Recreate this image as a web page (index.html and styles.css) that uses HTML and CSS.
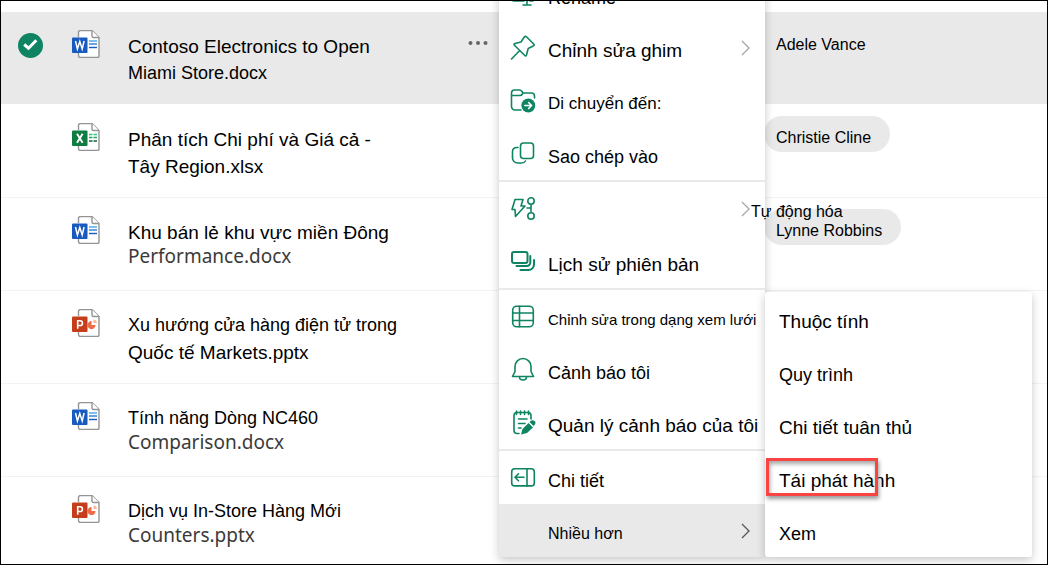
FILE: index.html
```html
<!DOCTYPE html>
<html lang="vi">
<head>
<meta charset="utf-8">
<title>Tài liệu</title>
<link rel="stylesheet" href="styles.css">
</head>
<body>
<svg class="defs" aria-hidden="true">
  <defs>
    <g id="page">
      <path d="M7.500 1.500h12l7 7v17a2 2 0 0 1-2 2h-17z" fill="#fff"/>
      <path d="M6.500 7V2.500a2 2 0 0 1 2-2H20L27 7.500V26a1.500 1.500 0 0 1-1.500 1.500h-17a2 2 0 0 1-2-2V23" fill="#fff" stroke="#949494" stroke-width="1.400"/>
      <path d="M20 .500V6a1.500 1.500 0 0 0 1.500 1.500H27" fill="#fff" stroke="#949494" stroke-width="1.400"/>
    </g>
    <symbol id="word" viewBox="0 0 28 28">
      <use href="#page"/>
      <path d="M17 11h8" stroke="#41a5ee" stroke-width="1.400"/><path d="M17 14h8" stroke="#2b7cd3" stroke-width="1.400"/><path d="M17 17.500h8" stroke="#185abd" stroke-width="1.400"/>
      <rect y="7.500" width="15.500" height="15.500" rx="1" fill="#185abd"/>
      <path d="M3.500 11l1.900 8 2.400-7.500 2.400 7.500 1.900-8" fill="none" stroke="#fff" stroke-width="1.500"/>
    </symbol>
    <symbol id="excel" viewBox="0 0 28 28">
      <use href="#page"/>
      <path d="M17 11.500h3.500M21.500 11.500H25" stroke="#33c481" stroke-width="1.500"/><path d="M17 14.500h3.500M21.500 14.500H25" stroke="#21a366" stroke-width="1.500"/><path d="M17 18h3.500M21.500 18H25" stroke="#185c37" stroke-width="1.500"/>
      <rect y="7.500" width="15.500" height="15.500" rx="1" fill="#107c41"/>
      <path d="M5 10.800l5.600 9M10.600 10.800l-5.600 9" fill="none" stroke="#fff" stroke-width="1.900"/>
    </symbol>
    <symbol id="ppt" viewBox="0 0 28 28">
      <use href="#page"/>
      <path d="M19.500 12v4h4a4 4 0 1 1-6.500-3q1-1 2.500-1z" fill="#ed6c47"/><path d="M21.500 10.500a4 4 0 0 1 3.500 3.500h-3.500z" fill="#ffb199"/>
      <rect y="7.500" width="15.500" height="15.500" rx="1" fill="#c43e1c"/>
      <path d="M5.700 19.800v-8h2.400a2.300 2.300 0 0 1 0 4.700H5.700" fill="none" stroke="#fff" stroke-width="1.600"/>
    </symbol>
  </defs>
</svg>
<main class="frame">
  <table class="files">
    <colgroup><col class="col-check"><col class="col-icon"><col class="col-name"><col class="col-more"><col></colgroup>
    <tbody>
      <tr class="selected">
        <td class="check-cell"><svg class="check" viewBox="0 0 25 25" aria-label="Đã chọn"><circle cx="12.500" cy="12.500" r="12.500" fill="#0e8463"/><path d="M6.200 11.500l4.300 3.700 7.800-8" fill="none" stroke="#fff" stroke-width="3"/></svg></td>
        <td><svg class="file-icon"><use href="#word"/></svg></td>
        <td><a href="#" class="name"><span class="t19">Contoso Electronics to Open</span><span class="t18">Miami Store.docx</span></a></td>
        <td><button class="more" aria-label="Thêm"><svg width="20" height="6" viewBox="0 0 20 6" fill="#666"><circle cx="2.500" cy="3" r="2"/><circle cx="10" cy="3" r="2"/><circle cx="17.500" cy="3" r="2"/></svg></button></td>
        <td><span class="person">Adele Vance</span></td>
      </tr>
      <tr>
        <td></td><td><svg class="file-icon"><use href="#excel"/></svg></td>
        <td><a href="#" class="name"><span class="t19">Phân tích Chi phí và Giá cả -</span><span class="t19">Tây Region.xlsx</span></a></td>
        <td></td><td><span class="person">Christie Cline</span></td>
      </tr>
      <tr>
        <td></td><td><svg class="file-icon"><use href="#word"/></svg></td>
        <td><a href="#" class="name"><span class="t19">Khu bán lẻ khu vực miền Đông</span><span class="alt">Performance.docx</span></a></td>
        <td></td><td><span class="person">Lynne Robbins</span></td>
      </tr>
      <tr>
        <td></td><td><svg class="file-icon"><use href="#ppt"/></svg></td>
        <td><a href="#" class="name"><span class="t18">Xu hướng cửa hàng điện tử trong</span><span class="t19">Quốc tế Markets.pptx</span></a></td>
        <td></td><td></td>
      </tr>
      <tr>
        <td></td><td><svg class="file-icon"><use href="#word"/></svg></td>
        <td><a href="#" class="name"><span class="t18">Tính năng Dòng NC460</span><span class="alt">Comparison.docx</span></a></td>
        <td></td><td></td>
      </tr>
      <tr>
        <td></td><td><svg class="file-icon"><use href="#ppt"/></svg></td>
        <td><a href="#" class="name"><span class="t18">Dịch vụ In-Store Hàng Mới</span><span class="alt">Counters.pptx</span></a></td>
        <td></td><td></td>
      </tr>
    </tbody>
  </table>

  <nav class="menu" aria-label="Lệnh tệp">
    <button class="item"><svg class="icon" viewBox="0 0 26 26"><path d="M14 6H4a2 2 0 0 0-2 2v9a2 2 0 0 0 2 2h10M20 6h2a2 2 0 0 1 2 2v9a2 2 0 0 1-2 2h-2M17 2v21M13 23h8"/></svg><span class="label t18">Rename</span></button>
    <button class="item"><svg class="icon" viewBox="0 0 26 26"><path d="M14.300 2q1.200-1.200 2.400 0l7 7q1.200 1.200-.500 2l-5 2.500-1.700 6.500q-.500 1.700-1.700.500L4.500 10.200q-1.200-1.200.500-1.700l6-1.500zM9.300 16L1.500 24"/></svg><span class="label t19">Chỉnh sửa ghim</span><svg class="chevron" viewBox="0 0 9 16"><path d="M1 1l7 7-7 7"/></svg></button>
    <button class="item"><svg class="icon" viewBox="0 0 26 26"><path d="M11 22H5a3.500 3.500 0 0 1-3.500-3.500V5A3 3 0 0 1 4.500 2h5q1.500 0 2.300 1.200L13 5h8.500a3 3 0 0 1 3 3v2M1.500 7.500h8.500q1.500 0 2.500-1.500L13 5"/><circle class="solid" cx="18.300" cy="17.500" r="6.900"/><path class="cut" d="M14.800 17.500h6.500M18.600 14.500l3 3-3 3"/></svg><span class="label t17">Di chuyển đến:</span></button>
    <button class="item"><svg class="icon" viewBox="0 0 26 26"><rect x="10.500" y="2" width="13" height="15.500" rx="3"/><path d="M8 6.500H6.500a4 4 0 0 0-4 4V17a5 5 0 0 0 5 5h4q3 0 4-2"/></svg><span class="label t18">Sao chép vào</span></button>
    <hr>
    <button class="item"><svg class="icon" viewBox="0 0 26 26"><path d="M5 3.500h8l-2 6.500h4L5.500 20.500l-.500-7H2zM17 12h4M21 8.500v7"/><circle cx="21" cy="5" r="3.200"/><circle cx="21" cy="20" r="3.200"/></svg><span class="label outer t16">Tự động hóa</span><svg class="chevron" viewBox="0 0 9 16"><path d="M1 1l7 7-7 7"/></svg></button>
    <button class="item"><svg class="icon bold" viewBox="0 0 26 26"><rect x="2" y="3" width="15.500" height="11" rx="2"/><path d="M20.300 7v6.500a3.500 3.500 0 0 1-3.500 3.500H6.500M24 11v4.500a5.500 5.500 0 0 1-5.500 5.500H10.500"/></svg><span class="label t19">Lịch sử phiên bản</span></button>
    <hr>
    <button class="item"><svg class="icon" viewBox="0 0 26 26"><rect x="2.700" y="2.200" width="20.600" height="20.600" rx="4"/><path d="M2.700 9h20.600M2.700 16.500h20.600M9.500 2.200v20.600"/></svg><span class="label t15">Chỉnh sửa trong dạng xem lưới</span></button>
    <button class="item"><svg class="icon" viewBox="0 0 26 26"><path d="M5 9.500a8 8 0 0 1 16 0v5l2.500 5h-21L5 14.500zM9.500 20a3.500 3 0 0 0 7 0"/></svg><span class="label t18">Cảnh báo tôi</span></button>
    <button class="item"><svg class="icon" viewBox="0 0 26 26"><path d="M9 23.500H7a3 3 0 0 1-3-3V5.500a3 3 0 0 1 3-3h11a3 3 0 0 1 3 3V9M6.500 1v3.500M10.500 1v3.500M14.500 1v3.500M18.500 1v3.500M8.500 9H17M8.500 13.500H15M8.500 18H11"/><path class="solid" d="M11 24.500l1.500-5.500 6-6 4.500 4.500-6 5.500zM19.500 12l1-1q2-1.500 4 0t0 4l-1 1z"/></svg><span class="label t19">Quản lý cảnh báo của tôi</span></button>
    <hr>
    <button class="item"><svg class="icon" viewBox="0 0 26 26"><rect x="1.700" y="3.700" width="22.600" height="17.200" rx="3"/><path d="M17 3.700v17.200M14 12.300H5M8.500 8.800L5 12.300l3.500 3.500"/></svg><span class="label t18">Chi tiết</span></button>
    <button class="item current" aria-expanded="true"><span class="icon"></span><span class="label t16">Nhiều hơn</span><svg class="chevron" viewBox="0 0 9 16"><path d="M1 1l7 7-7 7"/></svg></button>

    <div class="submenu">
      <button class="item"><span class="label t19">Thuộc tính</span></button>
      <button class="item"><span class="label t18">Quy trình</span></button>
      <button class="item"><span class="label t19">Chi tiết tuân thủ</span></button>
      <button class="item marked"><span class="label t19">Tái phát hành</span></button>
      <button class="item"><span class="label t18">Xem</span></button>
    </div>
  </nav>
</main>
</body>
</html>
```
FILE: styles.css
```css
*, *::after { box-sizing: border-box; }

body {
  margin: 0;
  background: #fff;
  color: #000;
  font-family: "Liberation Sans", Arial, sans-serif;
}

button {
  margin: 0;
  padding: 0;
  border: 0;
  background: none;
  color: inherit;
  font: inherit;
}

.defs { position: absolute; width: 0; height: 0; }

.t15 { font-size: 15px; }
.t16 { font-size: 16px; }
.t17 { font-size: 17px; }
.t18 { font-size: 18px; }
.t19 { font-size: 19px; }

.frame {
  position: relative;
  height: 100vh;
  padding-top: 11px;
  border: 1px solid #000;
  overflow: hidden;
}

/* File list */
.files {
  width: 100%;
  table-layout: fixed;
  border-collapse: separate;
  border-spacing: 0;
}
.col-check { width: 71px; }
.col-icon { width: 56px; }
.col-name { width: 340px; }
.col-more { width: 296px; }

.files td {
  height: 93px;
  padding: 0;
  border-bottom: 1px solid #f3f3f3;
  vertical-align: top;
}
.files .selected td {
  border-color: #fff;
  background: #e9e9e9;
  background-clip: padding-box;
}
.files .check-cell { padding: 21px 0 0 17px; }
.check { display: block; width: 25px; height: 25px; }
.file-icon { display: block; width: 28px; height: 28px; margin-top: 18px; }

.name {
  display: flex;
  flex-direction: column;
  padding-top: 21px;
  color: inherit;
  line-height: 27px;
  text-decoration: none;
  white-space: nowrap;
}
.name .alt {
  color: #3b3a39;
  font-family: "Noto Sans", "Open Sans", sans-serif;
  font-size: 19px;
  line-height: 21px;
}

.more { display: flex; padding-top: 28px; }

.person {
  display: inline-block;
  height: 36px;
  margin-top: 11px;
  padding: 6px 19px 0 12px;
  border-radius: 18px;
  background: #e9e9e9;
  font-size: 16px;
  line-height: 32px;
}

/* Context menu */
.menu {
  position: absolute;
  bottom: 7px;
  left: 498px;
  width: 266px;
  border-radius: 3px;
  background: #fff;
  box-shadow: 0 3px 10px rgba(0, 0, 0, .22);
}
.menu hr {
  height: 2px;
  margin: 0;
  border: 0;
  background: #e9e9e9;
}
.item {
  position: relative;
  display: flex;
  align-items: center;
  gap: 12px;
  width: 100%;
  height: 53px;
  padding: 0 15px 0 11px;
  white-space: nowrap;
  text-align: left;
}
.current { background: #e9e9e9; }
.label { padding-top: 6px; line-height: 22px; }
.outer { position: absolute; left: 252px; }

.icon {
  flex: none;
  width: 26px;
  height: 26px;
  fill: none;
  stroke: #0e8463;
  stroke-width: 1.6;
  stroke-linejoin: round;
  stroke-linecap: round;
}
.icon.bold { stroke-width: 2; }
.icon .solid { fill: #0e8463; stroke: none; }
.icon .cut { stroke: #fff; stroke-width: 1.6; }

.chevron {
  flex: none;
  width: 9px;
  height: 16px;
  margin-left: auto;
  fill: none;
  stroke: #a6a6a6;
  stroke-width: 1.3;
}
.current .chevron { stroke: #555; }

.submenu {
  position: absolute;
  bottom: 0;
  left: 100%;
  width: 267px;
  border-radius: 3px;
  background: #fff;
  box-shadow: 0 3px 10px rgba(0, 0, 0, .22);
}
.submenu .item { padding-left: 14px; }

.marked::after {
  content: "";
  position: absolute;
  top: 7px;
  left: 1px;
  width: 112px;
  height: 38px;
  border: 3px solid #fa4343;
  box-shadow: 1px 3px 4px rgba(0, 0, 0, .4), inset 1px 3px 4px rgba(0, 0, 0, .35);
}
```
